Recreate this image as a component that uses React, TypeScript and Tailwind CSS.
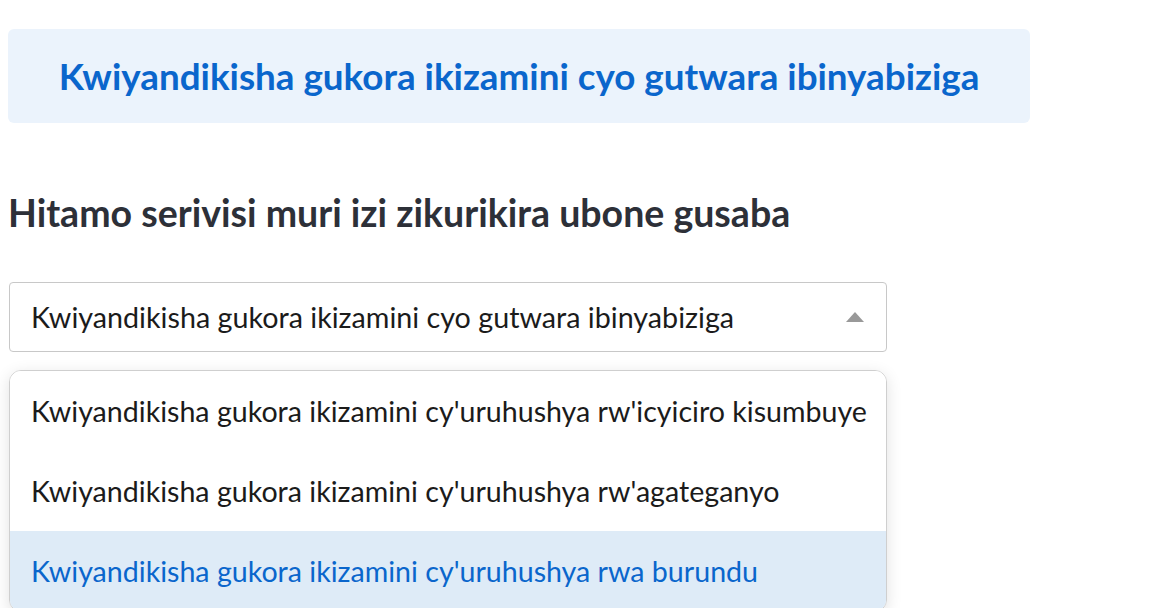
const OPTIONS = [
  "Kwiyandikisha gukora ikizamini cy'uruhushya rw'icyiciro kisumbuye",
  "Kwiyandikisha gukora ikizamini cy'uruhushya rw'agateganyo",
  "Kwiyandikisha gukora ikizamini cy'uruhushya rwa burundu",
];

export default function App() {
  return (
    <div className="h-[608px] w-[1152px] overflow-hidden bg-white font-['Lato',sans-serif]">
      <div className="w-[1030px] pl-2 pt-[29px]">
        <div className="flex h-[94px] items-center justify-center rounded-md bg-[#ebf3fc]">
          <h1 className="text-[36.8px] font-bold leading-[44px] text-[#0a66cc]">
            Kwiyandikisha gukora ikizamini cyo gutwara ibinyabiziga
          </h1>
        </div>
      </div>

      <h2 className="mt-[70px] pl-2 text-[37.5px] font-bold leading-[40px] text-[#2d3038]">
        Hitamo serivisi muri izi zikurikira ubone gusaba
      </h2>

      <div className="ml-[9px] mt-[49px] w-[878px]">
        <div className="flex h-[70px] items-center justify-between rounded border border-[#c8c8c8] pl-[21px] pr-[22px]">
          <span className="text-[28.7px] leading-[36px] text-[#1b1b1b]">
            Kwiyandikisha gukora ikizamini cyo gutwara ibinyabiziga
          </span>
          <svg width="18" height="10" viewBox="0 0 18 10">
            <polygon points="9,0 18,10 0,10" fill="#999" />
          </svg>
        </div>

        <ul className="mt-[18px] overflow-hidden rounded-xl border border-[#cfcfcf] shadow-[0_4px_16px_rgba(0,0,0,0.12)]">
          {OPTIONS.map((o, i) => (
            <li
              key={o}
              className={`flex h-[80px] items-center whitespace-nowrap pl-[21px] text-[28.6px] ${
                i === 2 ? "bg-[#deebf7] text-[#0a66cc]" : "bg-white text-[#1b1b1b]"
              }`}
            >
              {o}
            </li>
          ))}
        </ul>
      </div>
    </div>
  );
}
